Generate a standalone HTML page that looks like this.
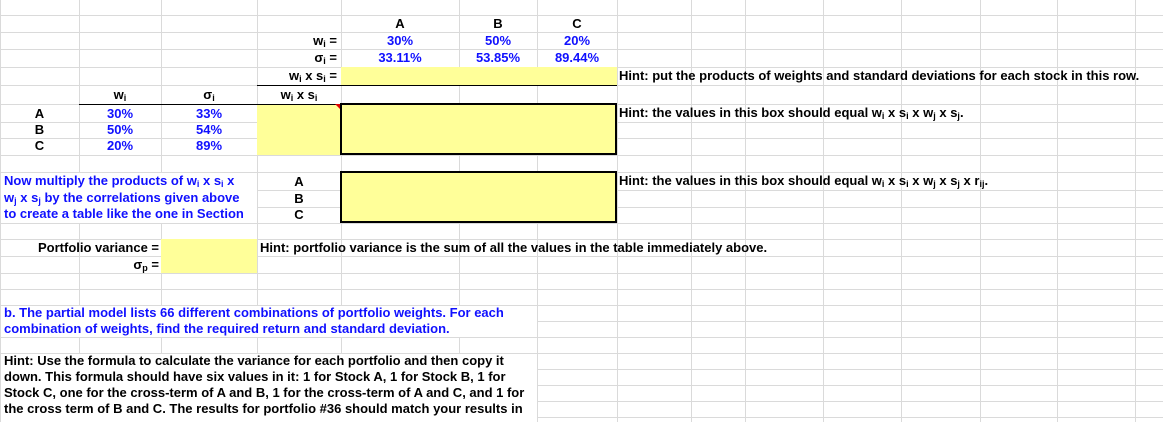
<!DOCTYPE html>
<html><head><meta charset="utf-8"><style>
body{margin:0;width:1163px;height:422px;overflow:hidden;background:#fff;position:relative;font-family:"Liberation Sans",Arial,sans-serif;font-weight:bold;font-size:13px;}
.v{position:absolute;top:0;width:1px;height:422px;background:#dadada}
.h{position:absolute;left:0;height:1px;width:1163px;background:#dadada}
.f{position:absolute}
.t{position:absolute;white-space:nowrap;line-height:17px;height:17px}
.c{text-align:center}.r{text-align:right}
.b{color:#1010ff}
sub{font-size:9px;vertical-align:-2px;line-height:0}
</style></head><body>
<div class="v" style="left:0"></div><div class="v" style="left:79px"></div><div class="v" style="left:161px"></div><div class="v" style="left:257px"></div><div class="v" style="left:341px"></div><div class="v" style="left:459px"></div><div class="v" style="left:537px"></div><div class="v" style="left:617px"></div><div class="v" style="left:691px"></div><div class="v" style="left:745px"></div><div class="v" style="left:823px"></div><div class="v" style="left:901px"></div><div class="v" style="left:980px"></div><div class="v" style="left:1057px"></div><div class="v" style="left:1135px"></div>
<div class="h" style="top:15px"></div><div class="h" style="top:32px"></div><div class="h" style="top:49px"></div><div class="h" style="top:67px"></div><div class="h" style="top:85px"></div><div class="h" style="top:104px"></div><div class="h" style="top:122px"></div><div class="h" style="top:138px"></div><div class="h" style="top:155px"></div><div class="h" style="top:172px"></div><div class="h" style="top:190px"></div><div class="h" style="top:207px"></div><div class="h" style="top:223px"></div><div class="h" style="top:239px"></div><div class="h" style="top:256px"></div><div class="h" style="top:273px"></div><div class="h" style="top:289px"></div><div class="h" style="top:305px"></div><div class="h" style="top:321px"></div><div class="h" style="top:337px"></div><div class="h" style="top:353px"></div><div class="h" style="top:369px"></div><div class="h" style="top:385px"></div><div class="h" style="top:401px"></div><div class="h" style="top:417px"></div>
<div class="f" style="left:1px;top:173px;width:256px;height:50px;background:#fff"></div>
<div class="f" style="left:1px;top:306px;width:536px;height:31px;background:#fff"></div>
<div class="f" style="left:1px;top:354px;width:536px;height:68px;background:#fff"></div>
<div class="f" style="left:341px;top:67px;width:276px;height:18px;background:#ffff99"></div>
<div class="f" style="left:257px;top:85px;width:360px;height:1px;background:#000"></div>
<div class="f" style="left:79px;top:104px;width:262px;height:1px;background:#000"></div>
<div class="f" style="left:257px;top:105px;width:84px;height:50px;background:#ffff99"></div>
<div class="f" style="left:335px;top:104px;width:0;height:0;border-left:5px solid transparent;border-top:5px solid #e00000"></div>
<div class="f" style="left:340px;top:103px;width:273px;height:48px;border:2px solid #000;background:#ffff99"></div>
<div class="f" style="left:340px;top:171px;width:273px;height:48px;border:2px solid #000;background:#ffff99"></div>
<div class="f" style="left:161px;top:239px;width:96px;height:34px;background:#ffff99"></div>
<div class="t c" style="left:341px;top:15px;width:118px">A</div>
<div class="t c" style="left:459px;top:15px;width:78px">B</div>
<div class="t c" style="left:537px;top:15px;width:80px">C</div>
<div class="t r" style="left:257px;top:32px;width:80px">w<sub>i</sub> =</div>
<div class="t c b" style="left:341px;top:32px;width:118px">30%</div>
<div class="t c b" style="left:459px;top:32px;width:78px">50%</div>
<div class="t c b" style="left:537px;top:32px;width:80px">20%</div>
<div class="t r" style="left:257px;top:49px;width:80px">σ<sub>i</sub> =</div>
<div class="t c b" style="left:341px;top:49px;width:118px">33.11%</div>
<div class="t c b" style="left:459px;top:49px;width:78px">53.85%</div>
<div class="t c b" style="left:537px;top:49px;width:80px">89.44%</div>
<div class="t r" style="left:257px;top:67px;width:80px">w<sub>i</sub> x s<sub>i</sub> =</div>
<div class="t" style="left:619px;top:67px">Hint: put the products of weights and standard deviations for each stock in this row.</div>
<div class="t c" style="left:79px;top:86px;width:82px">w<sub>i</sub></div>
<div class="t c" style="left:161px;top:86px;width:96px">σ<sub>i</sub></div>
<div class="t c" style="left:257px;top:86px;width:84px">w<sub>i</sub> x s<sub>i</sub></div>
<div class="t c" style="left:0;top:105px;width:79px">A</div>
<div class="t c" style="left:0;top:121px;width:79px">B</div>
<div class="t c" style="left:0;top:137px;width:79px">C</div>
<div class="t c b" style="left:79px;top:105px;width:82px">30%</div>
<div class="t c b" style="left:79px;top:121px;width:82px">50%</div>
<div class="t c b" style="left:79px;top:137px;width:82px">20%</div>
<div class="t c b" style="left:161px;top:105px;width:96px">33%</div>
<div class="t c b" style="left:161px;top:121px;width:96px">54%</div>
<div class="t c b" style="left:161px;top:137px;width:96px">89%</div>
<div class="t" style="left:619px;top:104px">Hint: the values in this box should equal w<sub>i</sub> x s<sub>i</sub> x w<sub>j</sub> x s<sub>j</sub>.</div>
<div class="t b" style="left:4px;top:172px">Now multiply the products of w<sub>i</sub> x s<sub>i</sub> x</div>
<div class="t b" style="left:4px;top:189px">w<sub>j</sub> x s<sub>j</sub> by the correlations given above</div>
<div class="t b" style="left:4px;top:205px">to create a table like the one in Section</div>
<div class="t c" style="left:257px;top:173px;width:84px">A</div>
<div class="t c" style="left:257px;top:190px;width:84px">B</div>
<div class="t c" style="left:257px;top:206px;width:84px">C</div>
<div class="t" style="left:619px;top:172px">Hint: the values in this box should equal w<sub>i</sub> x s<sub>i</sub> x w<sub>j</sub> x s<sub>j</sub> x r<sub>ij</sub>.</div>
<div class="t r" style="left:0;top:239px;width:159px">Portfolio variance =</div>
<div class="t r" style="left:0;top:256px;width:159px">σ<sub>p</sub> =</div>
<div class="t" style="left:260px;top:239px">Hint: portfolio variance is the sum of all the values in the table immediately above.</div>
<div class="t b" style="left:4px;top:304px">b. The partial model lists 66 different combinations of portfolio weights. For each</div>
<div class="t b" style="left:4px;top:320px">combination of weights, find the required return and standard deviation.</div>
<div class="t" style="left:4px;top:352px">Hint: Use the formula to calculate the variance for each portfolio and then copy it</div>
<div class="t" style="left:4px;top:368px">down. This formula should have six values in it: 1 for Stock A, 1 for Stock B, 1 for</div>
<div class="t" style="left:4px;top:384px">Stock C, one for the cross-term of A and B, 1 for the cross-term of A and C, and 1 for</div>
<div class="t" style="left:4px;top:400px">the cross term of B and C. The results for portfolio #36 should match your results in</div>
</body></html>
